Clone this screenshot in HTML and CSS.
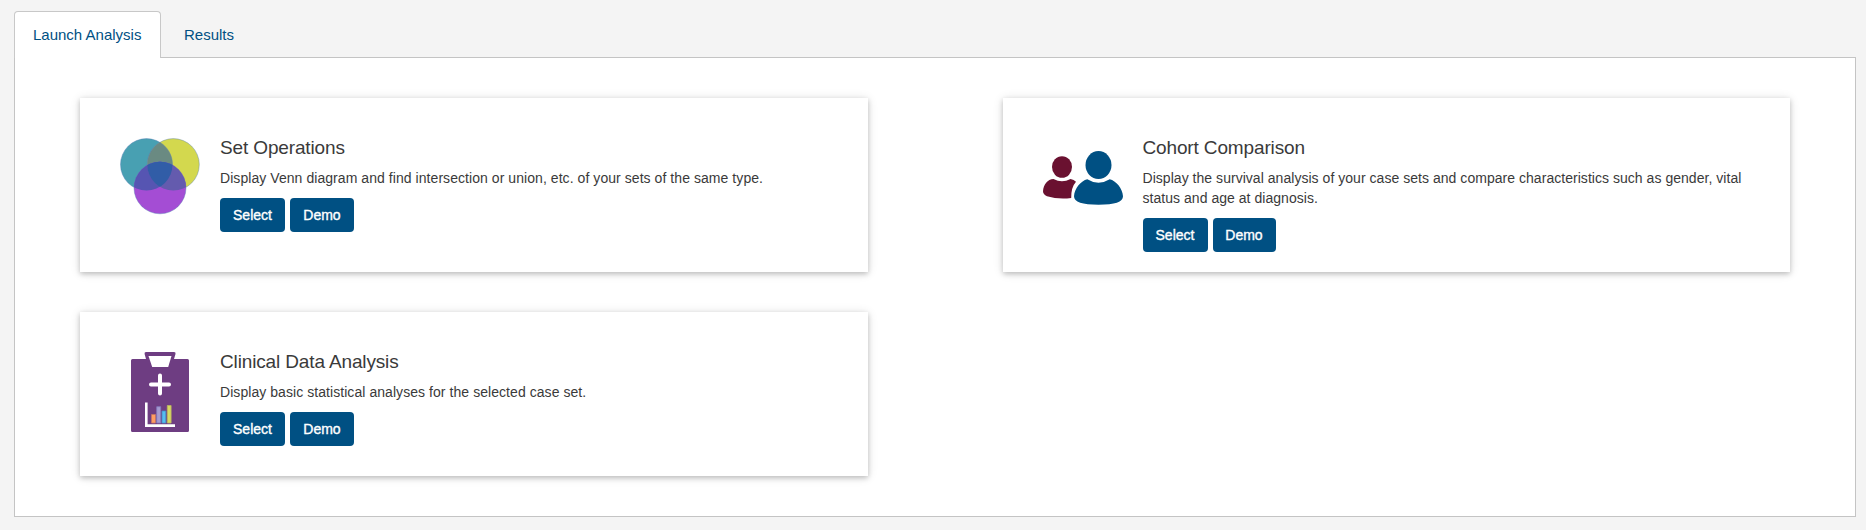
FILE: index.html
```html
<!DOCTYPE html>
<html lang="en">
<head>
<meta charset="utf-8">
<title>Analysis</title>
<link rel="stylesheet" href="styles.css">
</head>
<body>
<nav class="tabs">
  <a class="tab tab-active">Launch Analysis</a>
  <a class="tab">Results</a>
</nav>
<main class="panel">
  <section class="card">
    <svg class="icon" viewBox="0 -.3 80 80">
      <g stroke="#5a7fb8" stroke-opacity=".6" stroke-width=".7">
        <circle cx="26.5" cy="26.3" r="26" fill="#48a0b2"/>
        <circle cx="53.3" cy="26.3" r="26" fill="#d3d84e"/>
        <path d="M39.9 4A26 26 0 0 1 39.9 48.6A26 26 0 0 1 39.9 4Z" fill="#6a8a82"/>
        <circle cx="40" cy="49.5" r="26" fill="#a44dd4"/>
      </g>
      <clipPath id="left"><circle cx="26.5" cy="26.3" r="26"/></clipPath>
      <clipPath id="right"><circle cx="53.3" cy="26.3" r="26"/></clipPath>
      <circle cx="40" cy="49.5" r="26" fill="#5655b2" clip-path="url(#left)"/>
      <g clip-path="url(#right)">
        <circle cx="40" cy="49.5" r="26" fill="#645bae"/>
        <circle cx="40" cy="49.5" r="26" fill="#315da7" clip-path="url(#left)"/>
      </g>
    </svg>
    <div class="content">
      <h2 class="title">Set Operations</h2>
      <p class="text">Display Venn diagram and find intersection or union, etc. of your sets of the same type.</p>
      <div class="actions"><button class="button">Select</button><button class="button demo">Demo</button></div>
    </div>
  </section>
  <section class="card">
    <svg class="icon" viewBox="0 -5.3 80 80">
      <g fill="#6a1130">
        <ellipse cx="19" cy="23.7" rx="10" ry="10.8"/>
        <path d="M10.5 35.6Q19 40.5 27.5 35.6Q31 36.1 33 38.4Q28 44 28.2 54.8Q15 56.4 4 53Q0 51 0 48C.5 41 4.5 36 10.5 35.6Z"/>
      </g>
      <g fill="#005083">
        <ellipse cx="55.5" cy="21.8" rx="13" ry="14"/>
        <path d="M44.3 36Q55.5 43 66.7 36C73 37.500 79.5 45 80 53Q80 61.5 55.5 61.5Q31 61.5 31 53C31.5 45 38 37.5 44.3 36Z"/>
      </g>
    </svg>
    <div class="content">
      <h2 class="title">Cohort Comparison</h2>
      <p class="text text-long">Display the survival analysis of your case sets and compare characteristics such as gender, vital<br>status and age at diagnosis.</p>
      <div class="actions"><button class="button">Select</button><button class="button">Demo</button></div>
    </div>
  </section>
  <section class="card">
    <svg class="icon" viewBox="0 0 80 80">
      <path d="M12.5 7H26L24.6 2Q24.2 0 26 0H54Q56 0 55.5 2L54 7H67.5Q69 7 69 8.5V78.5Q69 80 67.5 80H12.5Q11 80 11 78.5V8.5Q11 7 12.5 7Z" fill="#6e3d82"/>
      <path d="M28.500 4H51.500L48.200 15H32.200Z" fill="#fff"/>
      <path d="M40 23.5V41.5M31 32.5H49" stroke="#fff" stroke-width="4" stroke-linecap="round"/>
      <path d="M26.3 50.5V73.600H55" stroke="#fff" stroke-width="2.6" fill="none"/>
      <g stroke-width=".8">
        <path d="M31.5 62.5h4V71h-4z" fill="#ff9c62" stroke="#c57663"/>
        <path d="M36.7 54.7h4V71h-4z" fill="#a69bd0" stroke="#8279bd"/>
        <path d="M42 59h3.800V71H42z" fill="#55bdf0" stroke="#448fc5"/>
        <path d="M47.3 53.5h3.800V71h-3.800z" fill="#d7d961" stroke="#b9b461"/>
      </g>
    </svg>
    <div class="content">
      <h2 class="title">Clinical Data Analysis</h2>
      <p class="text">Display basic statistical analyses for the selected case set.</p>
      <div class="actions"><button class="button">Select</button><button class="button demo">Demo</button></div>
    </div>
  </section>
</main>
</body>
</html>
```
FILE: styles.css
```css
* { box-sizing: border-box; }
body {
  margin: 0;
  padding: 11px 10px 13px 14px;
  height: 530px;
  display: flex;
  flex-direction: column;
  background: #f4f4f4;
  color: #3a3a3a;
  font-family: "Liberation Sans", Arial, sans-serif;
  font-size: 14px;
}
.tabs { display: flex; flex: none; height: 47px; gap: 4px; margin-bottom: -1px; }
.tab {
  padding: 13px 18px 0;
  border: 1px solid transparent;
  border-bottom: 0;
  border-radius: 4px 4px 0 0;
  color: #005083;
  font-size: 15px;
  line-height: 19px;
}
.tab-active {
  width: 147px;
  position: relative;
  background: #fff;
  border-color: #c8c8c8;
}
.panel {
  flex: 1;
  display: grid;
  grid-template-columns: 1fr 1fr;
  grid-template-rows: 174px 164px;
  gap: 40px 135px;
  padding: 40px 65px;
  background: #fff;
  border: 1px solid #c4c4c4;
}
.card {
  display: flex;
  gap: 20px;
  padding: 40px;
  background: #fff;
  box-shadow: 0 2px 5px rgba(0, 0, 0, .2), 0 1px 10px rgba(0, 0, 0, .12);
}
.icon { flex: none; width: 80px; height: 80px; }
.content { min-width: 0; }
.title { margin: 0 0 10px; font-size: 19px; font-weight: 400; line-height: 20px; letter-spacing: -.14px; }
.text { margin: 0 0 10px; line-height: 20px; letter-spacing: .06px; white-space: nowrap; }
.text-long { letter-spacing: .037px; }
.actions { display: flex; gap: 5px; }
.button {
  width: 65px;
  height: 34px;
  padding: 0;
  border: 0;
  border-radius: 4px;
  background: #005083;
  color: #fff;
  font: 14px/20px "Liberation Sans", Arial, sans-serif;
  -webkit-text-stroke: .35px #fff;
}
.button + .button { width: 63px; }
.button + .demo { width: 64px; }
```
